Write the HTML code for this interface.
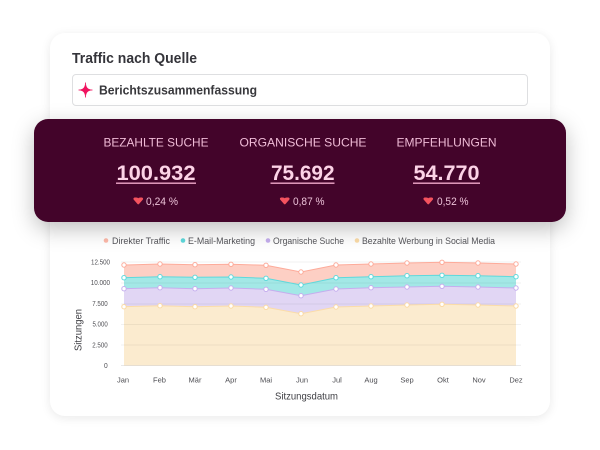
<!DOCTYPE html>
<html lang="de">
<head>
<meta charset="utf-8">
<title>Traffic nach Quelle</title>
<style>
html,body{margin:0;padding:0;width:600px;height:450px;overflow:hidden;background:#fff}
svg{display:block;position:absolute;left:0;top:0;filter:blur(.3px)}
text{font-family:"DejaVu Sans",sans-serif}
text.l,.l text{font-family:"Liberation Sans",sans-serif}
#card{position:absolute;left:50px;top:33px;width:500px;height:383px;border-radius:15px;background:#fff;box-shadow:0 2px 10px rgba(0,0,0,.09)}
#panel{position:absolute;left:34px;top:119px;width:532px;height:103px;border-radius:14px;background:#43042a;box-shadow:0 7px 22px rgba(0,0,0,.25)}
</style>
</head>
<body>
<div id="card"></div>
<svg width="600" height="450" viewBox="0 0 600 450" xmlns="http://www.w3.org/2000/svg" style="z-index:1">
  <text class="l" x="72" y="63" font-size="14.500" font-weight="700" fill="#34343a" textLength="125" lengthAdjust="spacingAndGlyphs">Traffic nach Quelle</text>
  <rect x="72.500" y="74.500" width="455" height="31" rx="3.500" fill="#fff" stroke="#dedfe1"/>
  <path d="M85.500 82.500 C86 87.800 87.500 89.500 92.500 90 C87.500 90.500 86 92.200 85.500 97.500 C85 92.200 83.500 90.500 78.500 90 C83.500 89.500 85 87.800 85.500 82.500Z" fill="#f0135f" stroke="#f0135f" stroke-width=".5"/>
  <text class="l" x="99" y="94.300" font-size="13" font-weight="700" fill="#38383c" textLength="158" lengthAdjust="spacingAndGlyphs">Berichtszusammenfassung</text>

  <!-- stacked area fills -->
  <path d="M124 306.700 160 305.700 195 306.700 231 306 266 307.300 301 313.700 336 307 371 306 407 305 442 304.300 478 305 516 306V365.500H124Z" fill="#fbebcf"/>
  <path d="M124 288.700 160 287.700 195 288.700 231 288 266 289.300 301 295.700 336 289 371 287.700 407 287 442 286.300 478 287 516 288V306L478 305 442 304.300 407 305 371 306 336 307 301 313.700 266 307.300 231 306 195 306.700 160 305.700 124 306.700Z" fill="#e1d6f4"/>
  <path d="M124 277.700 160 276.700 195 277.300 231 277 266 278.300 301 285 336 277.700 371 276.700 407 275.700 442 275.300 478 275.700 516 276.700V288L478 287 442 286.300 407 287 371 287.700 336 289 301 295.700 266 289.300 231 288 195 288.700 160 287.700 124 288.700Z" fill="#a3e8e6"/>
  <path d="M124 265 160 264 195 264.700 231 264.300 266 265.300 301 272 336 265 371 264 407 263 442 262.300 478 263 516 264V276.700L478 275.700 442 275.300 407 275.700 371 276.700 336 277.700 301 285 266 278.300 231 277 195 277.300 160 276.700 124 277.700Z" fill="#fdcfc4"/>

  <g stroke="#000" stroke-opacity=".055" stroke-width="1">
    <path d="M121 262H521M121 283H521M121 304H521M121 324.500H521M121 345H521"/>
    <path d="M121 365.500H521" stroke-opacity=".09"/>
  </g>

  <g class="l" font-size="7.500" fill="#4e4e53">
    <text x="91" y="264.300" textLength="19" lengthAdjust="spacingAndGlyphs">12.500</text>
    <text x="90.700" y="285" textLength="19.300" lengthAdjust="spacingAndGlyphs">10.000</text>
    <text x="92.300" y="306" textLength="15.400" lengthAdjust="spacingAndGlyphs">7.500</text>
    <text x="92.500" y="326.500" textLength="15.200" lengthAdjust="spacingAndGlyphs">5.000</text>
    <text x="92.300" y="347.300" textLength="15.400" lengthAdjust="spacingAndGlyphs">2.500</text>
    <text x="104" y="368" textLength="3.700" lengthAdjust="spacingAndGlyphs">0</text>
  </g>

  <g fill="none" stroke-width="1">
    <path d="M124 306.700 160 305.700 195 306.700 231 306 266 307.300 301 313.700 336 307 371 306 407 305 442 304.300 478 305 516 306" stroke="#fbdca8"/>
    <path d="M124 288.700 160 287.700 195 288.700 231 288 266 289.300 301 295.700 336 289 371 287.700 407 287 442 286.300 478 287 516 288" stroke="#c5aeee"/>
    <path d="M124 277.700 160 276.700 195 277.300 231 277 266 278.300 301 285 336 277.700 371 276.700 407 275.700 442 275.300 478 275.700 516 276.700" stroke="#5ed9dc"/>
    <path d="M124 265 160 264 195 264.700 231 264.300 266 265.300 301 272 336 265 371 264 407 263 442 262.300 478 263 516 264" stroke="#fdab9a"/>
  </g>

  <g fill="#fff" stroke-width="1">
    <g stroke="#fbd9a3">
      <circle cx="124" cy="306.700" r="2.200"/><circle cx="160" cy="305.700" r="2.200"/><circle cx="195" cy="306.700" r="2.200"/><circle cx="231" cy="306" r="2.200"/><circle cx="266" cy="307.300" r="2.200"/><circle cx="301" cy="313.700" r="2.200"/><circle cx="336" cy="307" r="2.200"/><circle cx="371" cy="306" r="2.200"/><circle cx="407" cy="305" r="2.200"/><circle cx="442" cy="304.300" r="2.200"/><circle cx="478" cy="305" r="2.200"/><circle cx="516" cy="306" r="2.200"/>
    </g>
    <g stroke="#c5aeee">
      <circle cx="124" cy="288.700" r="2.200"/><circle cx="160" cy="287.700" r="2.200"/><circle cx="195" cy="288.700" r="2.200"/><circle cx="231" cy="288" r="2.200"/><circle cx="266" cy="289.300" r="2.200"/><circle cx="301" cy="295.700" r="2.200"/><circle cx="336" cy="289" r="2.200"/><circle cx="371" cy="287.700" r="2.200"/><circle cx="407" cy="287" r="2.200"/><circle cx="442" cy="286.300" r="2.200"/><circle cx="478" cy="287" r="2.200"/><circle cx="516" cy="288" r="2.200"/>
    </g>
    <g stroke="#5ed9dc">
      <circle cx="124" cy="277.700" r="2.200"/><circle cx="160" cy="276.700" r="2.200"/><circle cx="195" cy="277.300" r="2.200"/><circle cx="231" cy="277" r="2.200"/><circle cx="266" cy="278.300" r="2.200"/><circle cx="301" cy="285" r="2.200"/><circle cx="336" cy="277.700" r="2.200"/><circle cx="371" cy="276.700" r="2.200"/><circle cx="407" cy="275.700" r="2.200"/><circle cx="442" cy="275.300" r="2.200"/><circle cx="478" cy="275.700" r="2.200"/><circle cx="516" cy="276.700" r="2.200"/>
    </g>
    <g stroke="#fdab9a">
      <circle cx="124" cy="265" r="2.200"/><circle cx="160" cy="264" r="2.200"/><circle cx="195" cy="264.700" r="2.200"/><circle cx="231" cy="264.300" r="2.200"/><circle cx="266" cy="265.300" r="2.200"/><circle cx="301" cy="272" r="2.200"/><circle cx="336" cy="265" r="2.200"/><circle cx="371" cy="264" r="2.200"/><circle cx="407" cy="263" r="2.200"/><circle cx="442" cy="262.300" r="2.200"/><circle cx="478" cy="263" r="2.200"/><circle cx="516" cy="264" r="2.200"/>
    </g>
  </g>

  <g class="l" font-size="7.500" fill="#4e4e53" text-anchor="middle">
    <text x="123" y="382.500">Jan</text><text x="159.500" y="382.500">Feb</text><text x="195" y="382.500">Mär</text><text x="231" y="382.500">Apr</text><text x="266" y="382.500">Mai</text><text x="302" y="382.500">Jun</text><text x="337" y="382.500">Jul</text><text x="371" y="382.500">Aug</text><text x="407" y="382.500">Sep</text><text x="443" y="382.500">Okt</text><text x="479" y="382.500">Nov</text><text x="516" y="382.500">Dez</text>
  </g>
  <text class="l" x="275" y="399.500" font-size="10.500" fill="#3e3e43" textLength="63" lengthAdjust="spacingAndGlyphs">Sitzungsdatum</text>
  <text class="l" transform="translate(81.500 351) rotate(-90)" font-size="10.500" fill="#3e3e43" textLength="42" lengthAdjust="spacingAndGlyphs">Sitzungen</text>

  <g class="l" font-size="9.500" fill="#55555a">
    <circle cx="106" cy="240.500" r="2.300" fill="#fdb9a9"/>
    <text x="112" y="244" textLength="58" lengthAdjust="spacingAndGlyphs">Direkter Traffic</text>
    <circle cx="183" cy="240.500" r="2.300" fill="#5ed9dc"/>
    <text x="188" y="244" textLength="67" lengthAdjust="spacingAndGlyphs">E-Mail-Marketing</text>
    <circle cx="268" cy="240.500" r="2.300" fill="#c5aeee"/>
    <text x="273" y="244" textLength="71" lengthAdjust="spacingAndGlyphs">Organische Suche</text>
    <circle cx="357" cy="240.500" r="2.300" fill="#fbdca8"/>
    <text x="362" y="244" textLength="133" lengthAdjust="spacingAndGlyphs">Bezahlte Werbung in Social Media</text>
  </g>
</svg>

<div id="panel" style="z-index:2"></div>
<svg width="600" height="450" viewBox="0 0 600 450" xmlns="http://www.w3.org/2000/svg" style="z-index:3">
  <g class="l" font-size="12" fill="#f0bcd7">
    <text x="103.500" y="146.500" textLength="105" lengthAdjust="spacingAndGlyphs">BEZAHLTE SUCHE</text>
    <text x="239.500" y="146.500" textLength="127" lengthAdjust="spacingAndGlyphs">ORGANISCHE SUCHE</text>
    <text x="396.500" y="146.500" textLength="100" lengthAdjust="spacingAndGlyphs">EMPFEHLUNGEN</text>
  </g>
  <g class="l" font-size="21" font-weight="700" fill="#fcd3e6">
    <text x="116.500" y="180" textLength="79" lengthAdjust="spacingAndGlyphs">100.932</text>
    <text x="271" y="180" textLength="63.500" lengthAdjust="spacingAndGlyphs">75.692</text>
    <text x="413.500" y="180" textLength="66" lengthAdjust="spacingAndGlyphs">54.770</text>
  </g>
  <g fill="#eea6c8">
    <rect x="116" y="182.500" width="80" height="1.400"/>
    <rect x="270.500" y="182.500" width="64" height="1.400"/>
    <rect x="413" y="182.500" width="67" height="1.400"/>
  </g>
  <g fill="#f4535f">
    <path d="M135 197.500C136.800 197.500 137.700 197.700 138.250 198.200C138.800 197.700 139.700 197.500 141.500 197.500C143 197.500 143.500 198.800 142.700 199.800L139 204C138.600 204.500 137.900 204.500 137.500 204L133.800 199.800C133 198.800 133.500 197.500 135 197.500Z"/>
    <path d="M281.500 197.500C283.300 197.500 284.200 197.700 284.750 198.200C285.300 197.700 286.200 197.500 288 197.500C289.500 197.500 290 198.800 289.200 199.800L285.500 204C285.100 204.500 284.400 204.500 284 204L280.300 199.800C279.500 198.800 280 197.500 281.500 197.500Z"/>
    <path d="M425 197.500C426.800 197.500 427.700 197.700 428.250 198.200C428.800 197.700 429.700 197.500 431.500 197.500C433 197.500 433.500 198.800 432.700 199.800L429 204C428.600 204.500 427.900 204.500 427.500 204L423.800 199.800C423 198.800 423.500 197.500 425 197.500Z"/>
  </g>
  <g class="l" font-size="11" fill="#ecc2d8">
    <text x="146" y="205" textLength="32" lengthAdjust="spacingAndGlyphs">0,24 %</text>
    <text x="293" y="205" textLength="31.500" lengthAdjust="spacingAndGlyphs">0,87 %</text>
    <text x="437" y="205" textLength="31.500" lengthAdjust="spacingAndGlyphs">0,52 %</text>
  </g>
</svg>
</body>
</html>
